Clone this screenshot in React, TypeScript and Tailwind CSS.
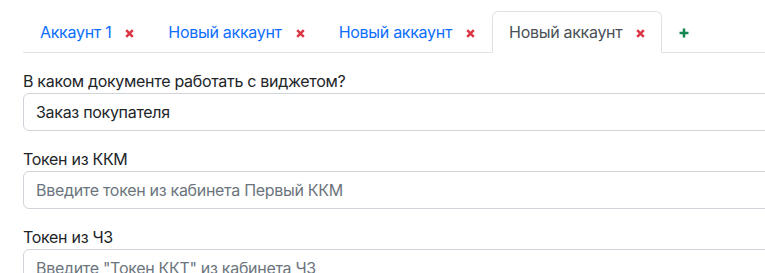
import React from "react";

const font = { fontFamily: 'Inter, "Noto Sans", sans-serif' };

function CloseIcon() {
  return (
    <svg width="9" height="9" viewBox="0 0 9 9" className="ml-[14px] mt-[3px] shrink-0">
      <path d="M1.2 1.2 L7.8 7.8 M7.8 1.2 L1.2 7.8" stroke="#dc3545" strokeWidth="2.5" strokeLinecap="butt" />
    </svg>
  );
}

function PlusIcon() {
  return (
    <svg width="10" height="10" viewBox="0 0 10 10" className="mt-[2px]">
      <path d="M5 0.5 V9.5 M0.5 5 H9.5" stroke="#198754" strokeWidth="2.6" />
    </svg>
  );
}

const tabs = [
  { name: "Аккаунт 1", active: false },
  { name: "Новый аккаунт", active: false },
  { name: "Новый аккаунт", active: false },
  { name: "Новый аккаунт", active: true },
];

function Field({ label, value, placeholder }: { label: string; value?: string; placeholder?: string }) {
  return (
    <div className="mb-4">
      <label className="block text-base leading-6 tracking-[-0.3px] text-[#212529]">{label}</label>
      <input
        readOnly
        value={value}
        placeholder={placeholder}
        className="block w-full h-[38px] px-3 py-1.5 text-base leading-6 tracking-[-0.3px] text-[#212529] placeholder:text-[#6c757d] bg-white border border-[#ced4da] rounded-md outline-none"
        style={font}
      />
    </div>
  );
}

export default function App() {
  return (
    <div className="w-full h-[273px] overflow-hidden bg-white" style={font}>
      <div className="w-[1000px] pl-[23px] pt-[11px]">
        <ul className="flex border-b border-[#dee2e6]">
          {tabs.map((t, i) => (
            <li key={i} className="-mb-px">
              <div
                className={
                  "flex items-center px-4 py-2 text-base leading-6 tracking-[-0.3px] border rounded-t-md " +
                  (t.active
                    ? "text-[#495057] bg-white border-[#dee2e6] border-b-white"
                    : "text-[#0d6efd] border-transparent")
                }
              >
                <span>{t.name}</span>
                <CloseIcon />
              </div>
            </li>
          ))}
          <li className="-mb-px">
            <div className="flex items-center px-4 py-2 text-base leading-6 border border-transparent h-[42px]">
              <PlusIcon />
            </div>
          </li>
        </ul>
        <div className="pt-4">
          <Field label="В каком документе работать с виджетом?" value="Заказ покупателя" />
          <Field label="Токен из ККМ" placeholder="Введите токен из кабинета Первый ККМ" />
          <Field label="Токен из ЧЗ" placeholder={'Введите "Токен ККТ" из кабинета ЧЗ'} />
        </div>
      </div>
    </div>
  );
}
